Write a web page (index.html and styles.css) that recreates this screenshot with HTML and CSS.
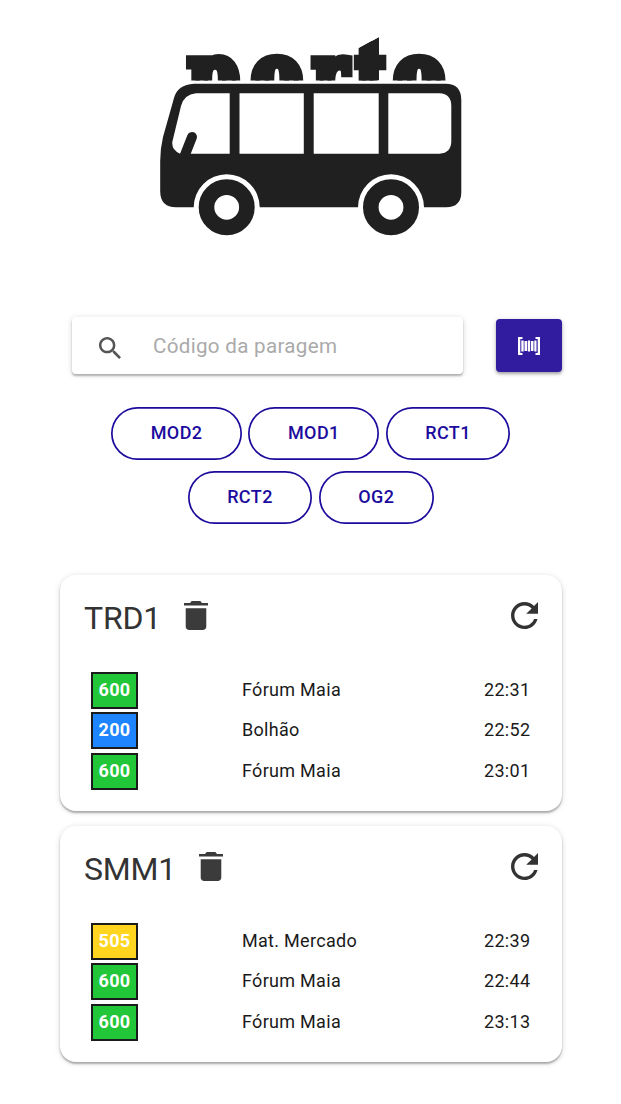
FILE: index.html
```html
<!DOCTYPE html>
<html lang="pt">
<head>
<meta charset="utf-8">
<title>Porto</title>
<link rel="stylesheet" href="styles.css">
</head>
<body>
<svg width="0" height="0" class="defs">
  <symbol id="trash" viewBox="5 3 14 18" preserveAspectRatio="none"><path d="M6 19c0 1.100.9 2 2 2h8c1.100 0 2-.9 2-2V7.500H6v11.500zM19 4.300h-3.500l-1-1.300h-5l-1 1.300H5v1.500h14V4.300z"/></symbol>
  <symbol id="refresh" viewBox="4 4 16 16"><path d="M17.650 6.350C16.200 4.900 14.210 4 12 4c-4.420 0-7.990 3.580-7.990 8s3.570 8 7.990 8c3.730 0 6.840-2.550 7.730-6h-2.080c-.82 2.330-3.040 4-5.650 4-3.310 0-6-2.690-6-6s2.690-6 6-6c1.660 0 3.140.69 4.220 1.780L13 11h7V4l-2.350 2.350z"/></symbol>
</svg>
<main class="page">
  <svg class="logo" viewBox="155 30 312 210" width="312" height="210">
    <clipPath id="roof"><path d="M155 48H359L379 37V48H467V80.500H155Z"/></clipPath>
    <g clip-path="url(#roof)" class="brand">
      <text transform="translate(188.500 102.500) scale(.88 1)">p</text>
      <text class="round" transform="translate(252.200 102) scale(.91 1)">o</text>
      <text transform="translate(312.500 102.500) scale(.82 1)">r</text>
      <text transform="translate(356 106) scale(.78 1.080)">t</text>
      <text class="round" transform="translate(394.400 102) scale(.91 1)">o</text>
      <path class="ink" stroke="none" d="M359 48L379 37V80.500H359Z"/>
    </g>
    <path class="ink" fill-rule="evenodd" d="M194 83.700H445.500Q461.300 83.700 461.300 100V192Q461.300 207.300 446 207.300H424A33 33 0 0 0 358 207.300H259.700A33 33 0 0 0 193.700 207.300H176Q160.200 207.300 160.200 191V161Q160.200 149 163 137L174 98Q177.500 84.500 194 83.700ZM196 93.300H229.700V153.700H180Q171.500 150 172.300 142L181 106Q184 94.500 196 93.300ZM239.500 93.300H303.800V153.700H239.500ZM313.700 93.300H378.700V153.700H313.700ZM388.300 93.300H439.500Q451.300 94 451.300 106V141Q451.300 153 439.500 153.700H388.300Z"/>
    <path class="wiper" d="M184.500 156L192 137"/>
    <circle class="wheel" cx="226.700" cy="207.300" r="20.200"/>
    <circle class="wheel" cx="391" cy="207.300" r="20.200"/>
  </svg>

  <form class="search">
    <label class="field">
      <svg viewBox="3 3 17.490 17.490" width="22" height="22"><path d="M15.500 14h-.79l-.28-.27C15.410 12.590 16 11.110 16 9.500 16 5.910 13.090 3 9.500 3S3 5.910 3 9.500 5.910 16 9.500 16c1.610 0 3.090-.59 4.230-1.570l.27.28v.79l5 4.990L20.490 19l-4.990-5zm-6 0C7.010 14 5 11.990 5 9.500S7.010 5 9.500 5 14 7.010 14 9.500 11.990 14 9.500 14z"/></svg>
      <input class="code" type="text" placeholder="Código da paragem">
    </label>
    <button class="scan" type="button" aria-label="Scan">
      <svg viewBox="0 0 22 20" width="22" height="20"><path d="M0 1H4.500V3H2.300V17H4.500V19H0ZM17.500 1H22V19H17.500V17H19.700V3H17.500ZM3.300 4.500H5.700V15.500H3.300ZM6.500 5H9.300V15H6.500ZM10 4.500H12.200V15.500H10ZM13 5H15.500V15H13ZM16.300 4.500H18.500V15.500H16.300Z"/></svg>
    </button>
  </form>

  <div class="chips">
    <button class="chip">MOD2</button><button class="chip">MOD1</button><button class="chip">RCT1</button><button class="chip">RCT2</button><button class="chip">OG2</button>
  </div>

  <section class="card">
    <header class="head"><h2 class="stop">TRD1</h2><svg class="trash"><use href="#trash"/></svg><svg class="refresh"><use href="#refresh"/></svg></header>
    <div class="rows">
      <div class="row"><b class="line green">600</b><span>Fórum Maia</span><time>22:31</time></div>
      <div class="row"><b class="line blue">200</b><span>Bolhão</span><time>22:52</time></div>
      <div class="row"><b class="line green">600</b><span>Fórum Maia</span><time>23:01</time></div>
    </div>
  </section>
  <section class="card">
    <header class="head"><h2 class="stop">SMM1</h2><svg class="trash"><use href="#trash"/></svg><svg class="refresh"><use href="#refresh"/></svg></header>
    <div class="rows">
      <div class="row"><b class="line yellow">505</b><span>Mat. Mercado</span><time>22:39</time></div>
      <div class="row"><b class="line green">600</b><span>Fórum Maia</span><time>22:44</time></div>
      <div class="row"><b class="line green">600</b><span>Fórum Maia</span><time>23:13</time></div>
    </div>
  </section>
</main>
</body>
</html>
```
FILE: styles.css
```css
* { box-sizing: border-box; }
body { margin: 0; background: #fff; font-family: Roboto, sans-serif; color: #1a1a1a; }
.defs { display: block; }
.page { width: 621px; height: 1104px; padding: 30px 59.500px 0 60px; }
.logo { display: block; margin-left: 95px; }
.ink { fill: #202020; }
.brand { fill: #202020; stroke: #202020; stroke-width: 9.500px; font: bold 82px "DejaVu Serif", serif; }
.round { stroke-width: 10.500px; font-size: 81px; }
.wiper { stroke: #202020; stroke-width: 10px; stroke-linecap: round; }
.wheel { fill: none; stroke: #202020; stroke-width: 15.600px; }
.search { display: flex; align-items: center; justify-content: space-between; margin: 77px 0 0 12px; }
.field { display: flex; align-items: center; width: 391px; height: 57px; padding-left: 27px; gap: 32px; border-radius: 4px; background: #fff; fill: #555; box-shadow: 0 2px 2px rgba(0,0,0,.25), 0 1px 6px rgba(0,0,0,.14); }
.field svg { position: relative; top: 2px; }
.code { width: 260px; padding: 0; border: 0; outline: 0; background: none; font: 20.600px Roboto, sans-serif; letter-spacing: .3px; }
.code::placeholder { color: #aaa; opacity: 1; }
.scan { display: grid; place-items: center; width: 66px; height: 53px; padding: 0; border: 0; border-radius: 4px; background: #311b9f; fill: #fff; box-shadow: 0 2px 3px rgba(0,0,0,.28), 0 1px 6px rgba(0,0,0,.14); }
.chips { display: flex; flex-wrap: wrap; justify-content: center; gap: 11.500px 6.500px; margin-top: 32.500px; padding: 0 45px; }
.chip { height: 53px; padding: 0 39.500px 2px; border: 0; border-radius: 27px; background: #fff; box-shadow: inset 0 0 0 1.700px #1c0b9d; color: #1c0b9d; font: 500 18px Roboto, sans-serif; letter-spacing: .4px; }
.card { height: 236px; padding: 0 24px; border-radius: 16px; background: #fff; box-shadow: 0 2px 2px rgba(0,0,0,.28), 0 1px 6px rgba(0,0,0,.14); }
.chips + .card { margin-top: 51px; }
.card + .card { margin-top: 15px; }
.head { display: flex; align-items: center; height: 85px; }
.stop { margin: 0; font-size: 32px; font-weight: 400; letter-spacing: -.2px; color: #333; }
.trash { width: 24px; height: 29px; margin: -5px 0 0 22.500px; fill: #3b3b3b; }
.refresh { width: 27px; height: 27px; margin: -5px 0 0 auto; fill: #333; }
.rows { display: grid; gap: 4.700px; padding: 11.500px 0 0 7px; }
.row { display: grid; grid-template-columns: 151px 242px auto; align-items: center; height: 36px; font-size: 18px; letter-spacing: .3px; }
.row > * { margin-top: -2px; }
.row > .line { display: grid; place-items: center; width: 47px; height: 37px; margin-top: 0; padding-bottom: 2px; border: 2px solid #1b1b1b; color: #fff; font-weight: 700; }
.green { background: #21c639; }
.blue { background: #1e85ff; }
.yellow { background: #ffd51f; }
```
